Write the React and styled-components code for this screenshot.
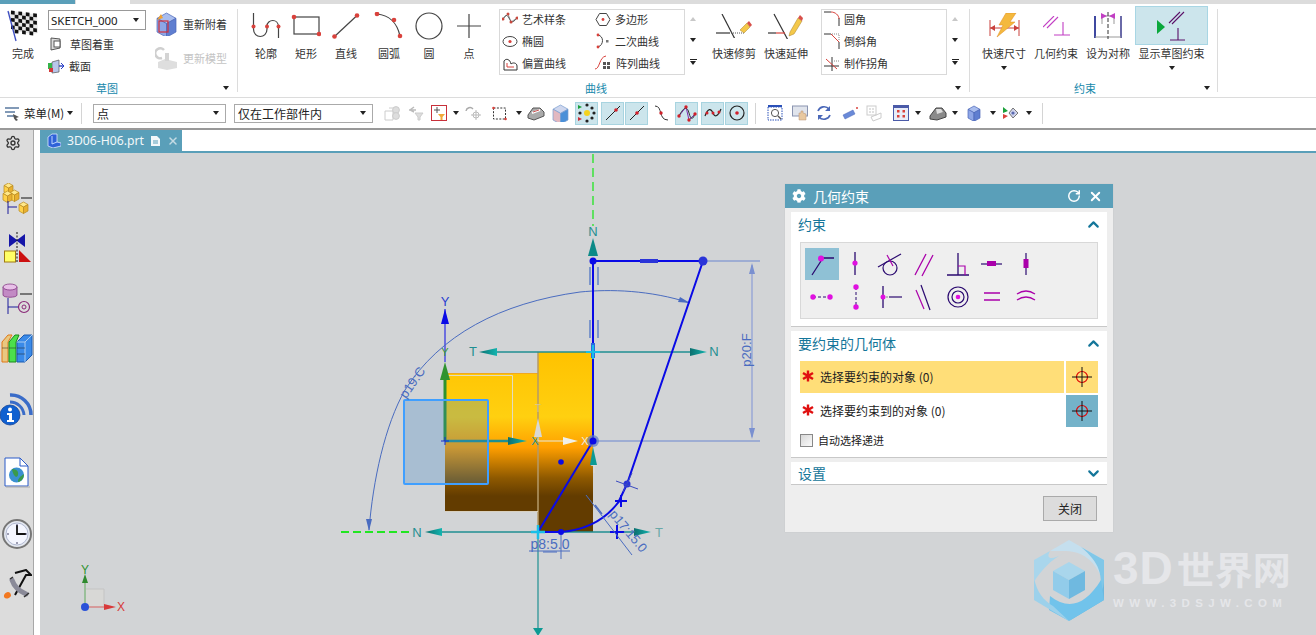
import React from 'react'
import styled, { createGlobalStyle } from 'styled-components'
import { ChevronUp, ChevronDown, RotateCw, X, Settings } from 'lucide-react'
import { FaCog } from 'react-icons/fa'

const CJK = `"Noto Sans CJK SC", "Noto Sans", sans-serif`
const TEAL = '#5a9fb9'

const Global = createGlobalStyle`
  html, body { margin: 0; padding: 0; overflow: hidden; background: #fff; }
  body { font-family: ${CJK}; font-size: 11px; color: #333; }
  svg { display: block; flex: none; }
`

const Page = styled.div`
  width: 1316px;
  height: 635px;
  display: flex;
  flex-direction: column;
  overflow: hidden;
`

const TopStrip = styled.div`
  height: 4px;
  flex: none;
  display: flex;
  background: #dcdcdc;
  &::before { content: ''; width: 75px; background: ${TEAL}; }
  &::after { content: ''; width: 54px; margin-left: 1px; background: #fff; }
`

/* ribbon */
const Ribbon = styled.div`
  height: 93px;
  flex: none;
  display: flex;
  background: #fff;
  border-bottom: 1px solid #dcdcdc;
  box-sizing: content-box;
`
const Group = styled.div`
  width: ${p => p.$w}px;
  display: flex;
  flex-direction: column;
  flex: none;
`
const GroupBody = styled.div`
  height: 74px;
  display: flex;
  padding-left: ${p => p.$pl || 0}px;
`
const GroupFoot = styled.div`
  height: 19px;
  display: flex;
  align-items: center;
  justify-content: space-between;
  padding: 0 ${p => p.$pr}px 0 ${p => p.$pl}px;
  font-size: 11px;
  color: #1688ab;
`
const Divider = styled.div`
  width: 1px;
  flex: none;
  margin: 5px 0;
  background: #dcdcdc;
`
const Caret = styled.span`
  display: block;
  flex: none;
  width: 0;
  height: 0;
  border-left: 3.5px solid transparent;
  border-right: 3.5px solid transparent;
  border-top: 4px solid ${p => p.$c || '#222'};
  transform: ${p => (p.$up ? 'scaleY(-1)' : 'none')};
`
const LargeBtn = styled.div`
  width: ${p => p.$w}px;
  margin-left: ${p => p.$ml || 0}px;
  flex: none;
  display: flex;
  flex-direction: column;
  align-items: center;
  padding-top: 2px;
`
const LargeIcon = styled.div`
  align-self: stretch;
  height: 39px;
  box-sizing: border-box;
  display: flex;
  justify-content: center;
  align-items: center;
  background: ${p => (p.$active ? '#cce5ec' : 'transparent')};
  border: 1px solid ${p => (p.$active ? '#a8d6e4' : 'transparent')};
`
const LargeLabel = styled.div`
  height: 16px;
  line-height: 16px;
  white-space: nowrap;
  color: #333;
`
const CaretRow = styled.div`
  margin-top: 5px;
`
const Column = styled.div`
  width: ${p => p.$w}px;
  margin-left: ${p => p.$ml || 0}px;
  flex: none;
  display: flex;
  flex-direction: column;
`
const SketchSelect = styled.div`
  height: 20px;
  margin-top: 6px;
  box-sizing: border-box;
  border: 1px solid #999;
  display: flex;
  align-items: center;
  justify-content: space-between;
  padding: 0 6px 0 2px;
  font-family: "Noto Sans", sans-serif;
  font-size: 11.5px;
  color: #222;
`
const SmallRow = styled.div`
  height: ${p => p.$h || 22}px;
  margin-top: ${p => p.$mt || 0}px;
  padding-left: ${p => p.$pl || 0}px;
  display: flex;
  align-items: center;
  gap: ${p => p.$gap || 4}px;
  white-space: nowrap;
  color: ${p => (p.$off ? '#c4c4c4' : '#333')};
`
const Gallery = styled.div`
  width: ${p => p.$w}px;
  height: 66px;
  margin: 5px 0 0 ${p => p.$ml || 0}px;
  box-sizing: border-box;
  border: 1px solid #d9d9d9;
  flex: none;
  display: grid;
  grid-template-columns: ${p => p.$cols};
  grid-auto-rows: 18px;
  row-gap: 4px;
  padding: 0 0 0 2px;
`
const GalleryItem = styled.div`
  display: flex;
  align-items: center;
  gap: 4px;
  white-space: nowrap;
`
const GalleryScroll = styled.div`
  width: ${p => p.$w}px;
  flex: none;
  height: 66px;
  margin-top: 5px;
  display: flex;
  flex-direction: column;
  align-items: center;
  justify-content: space-around;
  padding: 0 0 2px;
  box-sizing: border-box;
`
const MoreCaret = styled.span`
  display: flex;
  flex-direction: column;
  gap: 1px;
  &::before { content: ''; width: 7px; height: 1px; background: #222; }
`

/* selection toolbar */
const Toolbar = styled.div`
  height: 32px;
  flex: none;
  box-sizing: border-box;
  background: #fff;
  border-bottom: 2px solid #999;
  display: flex;
  align-items: center;
`
const MenuBtn = styled.div`
  width: 80px;
  padding-left: 4px;
  box-sizing: border-box;
  display: flex;
  align-items: center;
  gap: 3px;
  color: #222;
  font-size: 11.5px;
  white-space: nowrap;
`
const ToolSep = styled.div`
  width: 1px;
  height: 21px;
  flex: none;
  background: #d4d4d4;
  margin-left: ${p => p.$ml}px;
`
const ComboBox = styled.div`
  width: ${p => p.$w}px;
  height: 19px;
  flex: none;
  margin-left: ${p => p.$ml}px;
  box-sizing: border-box;
  border: 1px solid #aaa;
  padding: 0 6px 0 3px;
  display: flex;
  align-items: center;
  justify-content: space-between;
  color: #222;
  font-size: 12px;
`
const Tool = styled.div`
  width: ${p => p.$w}px;
  height: 23px;
  flex: none;
  margin-left: ${p => p.$ml || 0}px;
  box-sizing: border-box;
  display: flex;
  align-items: center;
  justify-content: center;
  background: ${p => (p.$on ? '#cce5ec' : 'transparent')};
  border: 1px solid ${p => (p.$on ? '#a8d4e0' : 'transparent')};
`

/* body */
const Body = styled.div`
  flex: 1;
  min-height: 0;
  display: flex;
`
const Rail = styled.div`
  width: 34px;
  flex: none;
  box-sizing: border-box;
  background: #dcdcdc;
  border-right: 1px solid #a8a8a8;
  display: flex;
  flex-direction: column;
  align-items: center;
`
const RailItem = styled.div`
  margin-top: ${p => p.$mt}px;
  margin-right: ${p => p.$mr || 0}px;
  flex: none;
`
const Gutter = styled.div`
  width: 6px;
  flex: none;
  background: #fff;
`
const Main = styled.div`
  flex: 1;
  min-width: 0;
  display: flex;
  flex-direction: column;
`
const TabBar = styled.div`
  height: 21px;
  flex: none;
  background: #fff;
  display: flex;
  border-bottom: 2px solid ${TEAL};
  box-sizing: content-box;
`
const Tab = styled.div`
  width: 142px;
  box-sizing: border-box;
  background: ${TEAL};
  color: #f2f8fa;
  display: flex;
  align-items: center;
  padding-left: 7px;
  font-family: "Noto Sans", sans-serif;
  font-size: 12.2px;
  gap: 6px;
  white-space: nowrap;
`
const TabClose = styled(X)`
  flex: none;
  color: #c4dbe4;
`
const Canvas = styled.div`
  flex: 1;
  position: relative;
  background: #d2d4d6;
  overflow: hidden;
`
const Drawing = styled.svg`
  position: absolute;
  left: 0;
  top: 0;
`

/* dialog */
const Dialog = styled.div`
  position: absolute;
  left: 745px;
  top: 31px;
  width: 328px;
  height: 348px;
  background: #eee;
  display: flex;
  flex-direction: column;
  box-shadow: 0 0 1px #bbb;
`
const DialogTitle = styled.div`
  height: 24px;
  flex: none;
  background: ${TEAL};
  color: #fff;
  display: flex;
  align-items: center;
  padding: 0 10px 0 7px;
  font-size: 14px;
  gap: 7px;
`
const TitleText = styled.div`
  flex: 1;
`
const Panel = styled.div`
  margin: ${p => p.$mt}px 6px 0;
  background: #fff;
  height: ${p => p.$h}px;
  flex: none;
  border-bottom: 1px solid #c8c8c8;
`
const PanelHead = styled.div`
  height: ${p => p.$h || 26}px;
  box-sizing: border-box;
  display: flex;
  align-items: center;
  justify-content: space-between;
  padding: 0 5px ${p => p.$pb ?? 2}px 7px;
  font-size: 14px;
  color: #14769a;
`
const Palette = styled.div`
  margin: 4px 9px 0;
  height: 77px;
  box-sizing: border-box;
  background: #efefef;
  border: 1px solid #d8d8d8;
  display: grid;
  grid-template-columns: repeat(7, 34px);
  grid-auto-rows: 32px;
  row-gap: 1px;
  padding: 5px 0 0 4px;
`
const PaletteCell = styled.div`
  display: flex;
  align-items: center;
  justify-content: center;
  background: ${p => (p.$on ? '#8fc1d5' : 'transparent')};
`
const PickRow = styled.div`
  display: flex;
  height: 32px;
  margin: ${p => p.$mt}px 9px 0;
  gap: 2px;
`
const PickLabel = styled.div`
  flex: 1;
  display: flex;
  align-items: center;
  gap: 6px;
  padding: 0 0 2px 2px;
  font-size: 12px;
  color: #222;
  background: ${p => (p.$on ? '#ffde78' : 'transparent')};
`
const PickBtn = styled.div`
  width: 32px;
  display: flex;
  align-items: center;
  justify-content: center;
  background: ${p => (p.$on ? '#ffde78' : '#74b2c9')};
`
const CheckRow = styled.div`
  display: flex;
  align-items: center;
  gap: 5px;
  margin: 5px 9px 0;
  font-size: 11px;
  color: #222;
`
const CheckBox = styled.span`
  width: 13px;
  height: 13px;
  box-sizing: border-box;
  border: 1px solid #888;
  background: linear-gradient(135deg, #d8d8d8, #fafafa);
`
const DialogFoot = styled.div`
  flex: 1;
  display: flex;
  justify-content: flex-end;
  align-items: flex-start;
  padding: 11px 16px 0 0;
`
const CloseBtn = styled.div`
  width: 54px;
  height: 25px;
  box-sizing: border-box;
  background: #dcdcdc;
  border: 1px solid #aaa;
  display: flex;
  align-items: center;
  justify-content: center;
  font-size: 12px;
  color: #222;
`

/* watermark */
const Watermark = styled.div`
  position: absolute;
  left: 993px;
  top: 387px;
  display: flex;
  align-items: flex-start;
  gap: 8px;
`
const MarkText = styled.div`
  color: #e5e6e9;
  font-weight: 700;
  padding-top: 5px;
`
const MarkTitle = styled.div`
  display: flex;
  align-items: center;
  height: 46px;
  font-family: "Liberation Sans", ${CJK};
  font-size: 46px;
  line-height: 46px;
  letter-spacing: 1px;
  span { font-family: ${CJK}; font-size: 38px; letter-spacing: 0; margin-left: 3px; }
`
const MarkUrl = styled.div`
  font-family: "Liberation Sans", sans-serif;
  font-size: 11.5px;
  letter-spacing: 5.4px;
  margin-top: 6px;
  white-space: nowrap;
`

/* small drawing helpers */
const RED = '#d9423c'
const INK = '#444'
const Svg = ({ w, h, children }) => (
  <svg width={w} height={h} viewBox={`0 0 ${w} ${h}`} fill="none">{children}</svg>
)
const Dots = ({ pts, r = 2, c = RED }) => pts.map(([x, y], i) => <circle key={i} cx={x} cy={y} r={r} fill={c} />)
const Cube = ({ x, y, s, top = '#a9bdee', left = '#8ea6e6', right = '#5f7ed0', edge = '#4a66b8' }) => {
  const h = s * 0.28
  return (
    <g stroke={edge} strokeWidth=".7">
      <path d={`M${x} ${y + h}L${x + s / 2} ${y}L${x + s} ${y + h}L${x + s / 2} ${y + 2 * h}Z`} fill={top} />
      <path d={`M${x} ${y + h}L${x + s / 2} ${y + 2 * h}V${y + s + h}L${x} ${y + s}Z`} fill={left} />
      <path d={`M${x + s} ${y + h}L${x + s / 2} ${y + 2 * h}V${y + s + h}L${x + s} ${y + s}Z`} fill={right} />
    </g>
  )
}

const FlagIcon = () => {
  const cells = []
  for (let r = 0; r < 6; r++) for (let c = 0; c < 7; c++) {
    if ((r + c) % 2 === 0) cells.push(<rect key={`${r}-${c}`} x={4 + c * 3.7} y={2 + r * 3.7} width="3.7" height="3.7" fill="#111" />)
  }
  return (
    <Svg w={32} h={33}>
      <path d="M2 3C10 0 20 7 30 4L31 24C22 27 13 20 7 24Z" fill="#e8e8e8" />
      <g transform="skewY(7) translate(0,-1)">{cells}</g>
      <path d="M1 2L9 32" stroke="#3a4bc0" strokeWidth="1.3" />
    </Svg>
  )
}
const ReattachIcon = () => (
  <Svg w={24} h={24}>
    <Cube x={2} y={1} s={19} />
    <rect x="4" y="9" width="9" height="11" stroke="#d0303a" strokeWidth="1.2" />
    <path d="M2 8L6 2L8 6Z" fill="#f0a030" />
  </Svg>
)
const UpdateIcon = () => (
  <Svg w={24} h={24}>
    <path d="M3 22V16L10 13L22 16V22L12 24Z" fill="#dedede" />
    <path d="M9 4A5 5 0 1 0 7 12" stroke="#cfcfcf" strokeWidth="2.5" />
    <rect x="10" y="7" width="4" height="8" fill="#d4d4d4" />
  </Svg>
)
const ShadeIcon = () => (
  <Svg w={14} h={14}>
    <path d="M1 1L10 2V11L1 13Z" fill="#ddd" stroke="#555" />
    <rect x="4" y="4" width="6" height="6" fill="#fff" stroke="#555" />
  </Svg>
)
const SectionIcon = () => (
  <Svg w={17} h={15}>
    <path d="M4 3L11 1V13L4 14Z" fill="#b8c6ea" stroke="#555" strokeWidth=".7" />
    <path d="M0 4H4V10H0Z" fill="#36b34a" />
    <path d="M1 9H5V13H1Z" fill="#d23a3a" />
    <path d="M11 7H16" stroke="#2a3fc4" strokeWidth="1.4" />
    <path d="M13 4L16 7L13 10" stroke="#2a3fc4" />
  </Svg>
)
const ProfileIcon = () => (
  <Svg w={32} h={25}>
    <path d="M3.5 0V16C3.5 26 17 26 17 16V13C17 6 28.5 5 28.5 14V25" stroke={INK} strokeWidth="1.2" />
    <Dots pts={[[3.5, 13.5], [17, 13.5], [28.5, 13.5]]} />
  </Svg>
)
const RectIcon = () => (
  <Svg w={30} h={25}>
    <rect x="3" y="4" width="25" height="17" stroke={INK} strokeWidth="1.2" />
    <Dots pts={[[3, 4], [28, 21]]} r={2.3} />
  </Svg>
)
const LineIcon = () => (
  <Svg w={28} h={26}>
    <path d="M2.5 23.5L25 2.5" stroke={INK} strokeWidth="1.2" />
    <Dots pts={[[2.5, 23.5], [25, 2.5]]} r={2.3} />
  </Svg>
)
const ArcIcon = () => (
  <Svg w={30} h={27}>
    <path d="M3 2C14 3 23 10 26 24" stroke={INK} strokeWidth="1.2" />
    <Dots pts={[[3, 2], [20, 8], [26, 24]]} r={2.3} />
  </Svg>
)
const CircleIcon = () => (
  <Svg w={28} h={28}>
    <circle cx="14" cy="14" r="13" stroke={INK} strokeWidth="1.2" />
  </Svg>
)
const PointIcon = () => (
  <Svg w={24} h={24}>
    <path d="M12 0V24M0 12H24" stroke={INK} strokeWidth="1.2" />
  </Svg>
)
const SplineIcon = () => (
  <Svg w={16} h={15}>
    <path d="M1 7L6 2L9 10L15 6" stroke="#999" />
    <path d="M1 7C3 3 5 2 7 6S10 12 15 6" stroke="#555" />
    <Dots pts={[[1, 7], [6, 2], [9, 10], [15, 6]]} r={1.5} c="#c9483e" />
  </Svg>
)
const PolygonIcon = () => (
  <Svg w={16} h={15}>
    <path d="M4.5 1.5H11.5L15 7.5L11.5 13.5H4.5L1 7.5Z" stroke="#444" />
    <Dots pts={[[8, 7.5]]} r={1.4} />
  </Svg>
)
const EllipseIcon = () => (
  <Svg w={16} h={13}>
    <ellipse cx="8" cy="6.5" rx="7" ry="5" stroke="#444" />
    <Dots pts={[[8, 6.5]]} r={1.6} />
  </Svg>
)
const ConicIcon = () => (
  <Svg w={16} h={16}>
    <path d="M3 2C9 3 9 12 3 14" stroke="#444" />
    <Dots pts={[[3, 2], [3, 14]]} r={1.4} />
    <rect x="11" y="7" width="2.5" height="2.5" fill="#777" />
  </Svg>
)
const OffsetIcon = () => (
  <Svg w={16} h={15}>
    <path d="M2 5V14H15V10C15 7 11 6 9 8C8 3 4 2 2 5Z" stroke="#333" />
    <path d="M5 7V11H12" stroke="#d9423c" />
  </Svg>
)
const PatternIcon = () => (
  <Svg w={17} h={16}>
    <path d="M0 14C5 14 4 2 11 1" stroke="#d9423c" />
    <g fill="#555">
      <rect x="8" y="7" width="3" height="3" /><rect x="12" y="7" width="3" height="3" />
      <rect x="8" y="11" width="3" height="3" /><rect x="12" y="11" width="3" height="3" />
    </g>
  </Svg>
)
const Eraser = ({ long }) => (
  <g>
    <path d={long ? 'M22 19L30 5L34 8L26 21L21 23Z' : 'M24 16L31 9L34 13L28 19Z'} fill="#f4c84a" stroke="#a8822a" strokeWidth=".5" />
    <path d={long ? 'M30 5L32 2L35 5L34 8Z' : 'M31 9L33 7L36 11L34 13Z'} fill="#d8504a" />
  </g>
)
const TrimIcon = () => (
  <Svg w={36} h={24}>
    <path d="M6 0L21 29" stroke="#333" strokeWidth="1.2" />
    <path d="M0 19H14" stroke="#333" strokeWidth="1.2" />
    <path d="M15 19H29" stroke="#555" strokeDasharray="1 1" />
    <Eraser />
  </Svg>
)
const ExtendIcon = () => (
  <Svg w={36} h={26}>
    <path d="M6 1L21 29" stroke="#333" strokeWidth="1.2" />
    <path d="M0 20H8" stroke="#333" strokeWidth="1.2" />
    <path d="M8 20H17" stroke="#d9423c" strokeWidth="1.2" />
    <Eraser long />
  </Svg>
)
const FilletIcon = () => (
  <Svg w={16} h={16}>
    <path d="M0 1H7M15 7V15" stroke="#333" />
    <path d="M7 1C11 1 15 4 15 8" stroke="#d9423c" />
  </Svg>
)
const ChamferIcon = () => (
  <Svg w={16} h={16}>
    <path d="M8 1H15V8" stroke="#888" strokeDasharray="1 1" />
    <path d="M0 1H7L15 9V16" stroke="#333" />
    <path d="M7 1L15 9" stroke="#d9423c" />
  </Svg>
)
const CornerIcon = () => (
  <Svg w={16} h={15}>
    <path d="M8 1V15M0 10H15" stroke="#333" />
    <path d="M2 3L13 13" stroke="#d9423c" />
    <path d="M10 5H15" stroke="#888" strokeDasharray="1 1" />
  </Svg>
)
const RapidDimIcon = () => (
  <Svg w={31} h={25}>
    <path d="M1 7V23M30 7V23M1 15H30" stroke="#c9403c" />
    <path d="M1 15L6 12V18ZM30 15L25 12V18Z" fill="#c9403c" />
    <path d="M17 0H27L21 9H26L8 24L14 12H10Z" fill="#f4b93e" stroke="#e08a20" strokeWidth=".5" />
  </Svg>
)
const GeoIcon = () => (
  <Svg w={27} h={20}>
    <path d="M0 11L11 0M4 12L15 1" stroke="#c23fc4" strokeWidth="1.1" />
    <path d="M20 6V19M11 19H27" stroke="#c23fc4" strokeWidth="1.1" />
  </Svg>
)
const SymIcon = () => (
  <Svg w={28} h={27}>
    <path d="M1 4V26" stroke="#3f48a0" strokeWidth="2" />
    <path d="M27 4V26" stroke="#6a6aa8" strokeWidth="2" />
    <path d="M1 25H27" stroke="#999" />
    <path d="M8 4H20M8 4V12M20 4V12" stroke="#999" />
    <path d="M14 0V27" stroke="#333" strokeDasharray="4 2" />
    <path d="M13 4L7 1V7ZM15 4L21 1V7Z" fill="#c23fc4" />
  </Svg>
)
const ShowConIcon = () => (
  <Svg w={31} h={30}>
    <path d="M1 9V23L9 16Z" fill="#0aa83c" />
    <path d="M13 12L24 1M16 13L28 1" stroke="#5a1068" strokeWidth="1.1" />
    <path d="M22 17V29M14 29H29" stroke="#5a1068" strokeWidth="1.1" />
  </Svg>
)

/* toolbar icons */
const MenuIcon = () => (
  <Svg w={17} h={15}>
    <path d="M1 2H15M1 6H11M3 10H11" stroke="#5a7aa0" strokeWidth="1.4" />
    <path d="M9 8L15 11L12 12L14 14L12 15L10 12.5Z" fill="#555" />
  </Svg>
)
const G1 = () => (
  <Svg w={17} h={17}>
    <path d="M1 6H9V15H1ZM5 3H11V8" stroke="#ccc" />
    <circle cx="12" cy="5" r="3.4" fill="#ddd" stroke="#ccc" />
    <circle cx="12" cy="11" r="3.4" fill="#ddd" stroke="#ccc" />
  </Svg>
)
const G2 = () => (
  <Svg w={16} h={16}>
    <path d="M1 5H8M6 2L2 5L6 7" stroke="#bbb" strokeWidth="1.4" />
    <path d="M7 8H15L12 12V15H10V12Z" fill="#ddd" stroke="#ccc" />
  </Svg>
)
const FilterBox = () => (
  <Svg w={16} h={16}>
    <rect x=".5" y=".5" width="15" height="15" stroke="#c8303a" />
    <path d="M3 5H9M6 2V8" stroke="#555" />
    <path d="M7 9H14L11.5 12V15H9.5V12Z" fill="#f2a93a" />
  </Svg>
)
const G3 = () => (
  <Svg w={17} h={15}>
    <path d="M1 5A4 4 0 0 1 8 3" stroke="#aaa" strokeWidth="1.4" />
    <path d="M11 4V14M6 9H16" stroke="#bbb" />
    <circle cx="11" cy="9" r="3" stroke="#bbb" />
  </Svg>
)
const Marquee = () => (
  <Svg w={15} h={15}>
    <rect x="1.5" y="2" width="12" height="11" stroke="#333" strokeDasharray="2 1.4" />
    <Dots pts={[[1.5, 2], [13.5, 13]]} r={1.3} />
  </Svg>
)
const Box3 = () => (
  <Svg w={18} h={15}>
    <path d="M1 9L6 2H13L17 6V10L7 14L1 12Z" fill="#aaa" stroke="#555" />
    <path d="M5 7L13 4" stroke="#fff" strokeWidth="2" />
    <path d="M6 6L12 4" stroke="#c55" />
  </Svg>
)
const BlueBox = () => (
  <Svg w={18} h={18}>
    <Cube x={1} y={1} s={15} top="#cfd7ee" left="#e2b8c0" right="#4a90d8" edge="#7a9ed0" />
  </Svg>
)
const SnapA = () => (
  <Svg w={20} h={20}>
    <circle cx="10" cy="10" r="3" fill="#f4d320" />
    <Dots pts={[[10, 2], [10, 18], [17, 10], [3, 10], [15, 5], [15, 15]]} r={1.6} c="#222" />
    <path d="M1 2L5 4L1 6Z" fill="#1ba03a" />
    <path d="M1 14L5 16L1 18Z" fill="#c9303a" />
  </Svg>
)
const SnapLine = ({ t }) => (
  <Svg w={16} h={16}>
    <path d="M1 15L15 1" stroke="#222" />
    <Dots pts={[[t, 16 - t]]} r={1.8} c="#d0202a" />
  </Svg>
)
const SCurve = () => (
  <Svg w={14} h={16}>
    <path d="M0 1C8 1 3 15 13 15" stroke="#333" />
    <Dots pts={[[6, 8]]} r={1.7} c="#d0202a" />
  </Svg>
)
const SnapPoly = () => (
  <Svg w={20} h={17}>
    <path d="M2 11L9 2L12 15L18 9" stroke="#8030b0" />
    <path d="M2 11C6 3 10 0 12 8S16 14 18 9" stroke="#333" />
    <Dots pts={[[2, 11], [9, 2], [12, 15], [18, 9]]} r={1.7} c="#d0202a" />
  </Svg>
)
const SnapWave = () => (
  <Svg w={18} h={12}>
    <path d="M1 9C4 1 7 1 9 6S14 9 17 2" stroke="#222" strokeWidth="1.2" />
    <Dots pts={[[3, 6], [9, 6], [15, 5]]} r={1.5} c="#d0202a" />
  </Svg>
)
const SnapCircle = () => (
  <Svg w={16} h={16}>
    <circle cx="8" cy="8" r="7" stroke="#222" strokeWidth="1.2" />
    <Dots pts={[[8, 8]]} r={1.8} c="#d0202a" />
  </Svg>
)
const ViewFit = () => (
  <Svg w={16} h={16}>
    <path d="M1 1H15" stroke="#2a50b8" strokeWidth="2" />
    <rect x="1" y="2" width="14" height="13" stroke="#2a50b8" strokeDasharray="1.5 1" />
    <circle cx="8" cy="8" r="3.6" stroke="#555" />
    <path d="M11 11L14 14" stroke="#555" strokeWidth="1.4" />
  </Svg>
)
const ViewPan = () => (
  <Svg w={16} h={16}>
    <rect x=".5" y="1" width="15" height="10" fill="#e0e4ec" stroke="#8a94b0" />
    <path d="M7 15V8L9 8V6H11V8L14 9V15Z" fill="#e8c8a0" stroke="#b89070" strokeWidth=".5" />
  </Svg>
)
const ViewRot = () => (
  <Svg w={16} h={16}>
    <path d="M2 6A6.5 6.5 0 0 1 13 4M14 10A6.5 6.5 0 0 1 3 12" stroke="#4a68b8" strokeWidth="1.7" />
    <path d="M14 1V6H9ZM2 15V10H7Z" fill="#4a68b8" />
  </Svg>
)
const Wand = () => (
  <Svg w={16} h={14}>
    <path d="M1 9L11 4L13 8L3 13Z" fill="#6a8ad8" stroke="#4a66b8" strokeWidth=".5" />
    <Dots pts={[[15, 2]]} r={1} />
  </Svg>
)
const LayoutIcon = () => (
  <Svg w={16} h={17}>
    <rect x="1" y="1" width="9" height="9" stroke="#ccc" />
    <path d="M5 12L15 8V13L7 16Z" stroke="#ccc" />
    <Dots pts={[[4, 4], [7, 4], [4, 7], [7, 7]]} r={.7} c="#aaa" />
  </Svg>
)
const FourView = () => (
  <Svg w={16} h={16}>
    <rect x=".5" y=".5" width="15" height="15" fill="#e8ecf8" stroke="#4a5aa8" />
    <path d="M.5 2H15.5" stroke="#4a5aa8" strokeWidth="2" />
    <g fill="#d9423c"><rect x="4" y="5" width="2.5" height="2.5" /><rect x="9.5" y="5" width="2.5" height="2.5" /><rect x="4" y="10" width="2.5" height="2.5" /><rect x="9.5" y="10" width="2.5" height="2.5" /></g>
  </Svg>
)
const Shaded = () => (
  <Svg w={18} h={15}>
    <path d="M1 10L7 2H13L17 7V11L8 14L1 13Z" fill="#8a8a8a" stroke="#444" />
    <path d="M7 3H12L14 6L8 8Z" fill="#ddd" />
  </Svg>
)
const SmallBlue = () => (
  <Svg w={16} h={16}>
    <Cube x={1} y={1} s={12} />
  </Svg>
)
const ShowHide = () => (
  <Svg w={16} h={14}>
    <path d="M1 1L6 5L1 7Z" fill="#1ba03a" />
    <path d="M1 8L6 10L1 13Z" fill="#d9423c" />
    <path d="M7 7L11 2L16 7L11 12Z" fill="#d0d4ec" stroke="#777" />
    <circle cx="11" cy="7" r="1.6" fill="#5a6ab0" />
  </Svg>
)

/* constraint palette */
const P = '#aa00aa'
const N = '#2b0a70'
const M = '#e010e0'
const Con = ({ children }) => <Svg w={30} h={30}>{children}</Svg>
const constraintIcons = [
  <Con><path d="M5 26L14 12M15 9H27" stroke={N} strokeWidth="1.3" /><circle cx="14" cy="9.5" r="3" fill={M} /></Con>,
  <Con><path d="M14 3V26" stroke={N} strokeWidth="1.3" /><circle cx="14" cy="14" r="2.6" fill={M} /></Con>,
  <Con><circle cx="15" cy="19" r="7" stroke={N} strokeWidth="1.2" /><path d="M3 18L26 5" stroke={N} strokeWidth="1.2" /><path d="M12 6L18 17" stroke={P} strokeWidth="1.2" /></Con>,
  <Con><path d="M6 26L17 5M13 27L24 6" stroke={P} strokeWidth="1.3" /></Con>,
  <Con><path d="M15 4V26M4 26H26" stroke={N} strokeWidth="1.3" /><path d="M15 17H22V26" stroke={P} strokeWidth="1.2" /></Con>,
  <Con><path d="M4 15H25" stroke={N} strokeWidth="1.2" /><rect x="10" y="12" width="9" height="5" fill={P} /></Con>,
  <Con><path d="M15 4V26" stroke={N} strokeWidth="1.2" /><rect x="12.5" y="10" width="5" height="9" fill={P} /></Con>,
  <Con><path d="M6 15H23" stroke={N} strokeDasharray="3 2" /><circle cx="6" cy="15" r="2.7" fill={M} /><circle cx="23" cy="15" r="2.7" fill={M} /></Con>,
  <Con><path d="M15 5V26" stroke={N} strokeDasharray="3 2" /><circle cx="15" cy="5" r="2.7" fill={M} /><circle cx="15" cy="25" r="2.7" fill={M} /></Con>,
  <Con><path d="M8 4V26" stroke={N} strokeWidth="1.3" /><path d="M8 15H14" stroke="#888" strokeDasharray="2 1" /><path d="M14 15H27" stroke={N} strokeWidth="1.2" /><circle cx="8" cy="15" r="2.5" fill={M} /></Con>,
  <Con><path d="M7 8L15 27" stroke={P} strokeWidth="1.2" /><path d="M12 3L21 28" stroke={N} strokeWidth="1.2" /></Con>,
  <Con><circle cx="15" cy="15" r="10" stroke={N} strokeWidth="1.2" /><circle cx="15" cy="15" r="6" stroke={N} strokeWidth="1.2" /><circle cx="15" cy="15" r="2.3" fill={M} /></Con>,
  <Con><path d="M7 11H23M7 18H23" stroke={P} strokeWidth="1.3" /></Con>,
  <Con><path d="M6 12C12 8 18 8 24 12M6 18C12 14 18 14 24 18" stroke={P} strokeWidth="1.3" /></Con>,
]
const Target = () => (
  <Svg w={20} h={20}>
    <circle cx="10" cy="10" r="5.5" stroke="#e00000" strokeWidth="1.2" />
    <path d="M10 0V20M0 10H20" stroke="#111" />
  </Svg>
)
const Star = () => (
  <Svg w={12} h={12}>
    <path d="M6 .5V11.5M1 3L11 9M11 3L1 9" stroke="#e01010" strokeWidth="2.4" />
  </Svg>
)
const PartIcon = () => (
  <Svg w={14} h={15}>
    <path d="M5 1H10V9L14 10V13L6 15L1 13V4Z" fill="#2f62d8" stroke="#dce8ff" strokeWidth=".8" />
    <path d="M5 3V11L10 9" stroke="#bcd4ff" />
  </Svg>
)
const TabDoc = () => (
  <Svg w={11} h={12}>
    <path d="M1 1H7L10 4V11H1Z" fill="#f4f8fa" />
    <path d="M3 6H8M3 8H8" stroke={TEAL} />
  </Svg>
)

/* rail icons */
const Tiny = ({ x, y, s }) => <Cube x={x} y={y} s={s} top="#ffe88a" left="#ffd24a" right="#e8b030" edge="#b88a20" />
const AssemblyIcon = () => (
  <Svg w={30} h={32}>
    <Tiny x={2} y={0} s={9} /><Tiny x={8} y={7} s={9} /><Tiny x={1} y={8} s={9} />
    <path d="M6 18V31M6 24H15" stroke="#1a1a9a" />
    <path d="M19 15H30" stroke="#111" />
    <Tiny x={17} y={19} s={9} />
  </Svg>
)
const ConstraintNavIcon = () => (
  <Svg w={30} h={31}>
    <path d="M7 2L15 8L23 2V15L15 9L7 15Z" fill="#1616a8" />
    <rect x="2.5" y="19" width="11" height="11" fill="#ffff66" stroke="#a07a10" />
    <path d="M17 18L29 30H17Z" fill="#cc1010" />
    <path d="M15 0V31" stroke="#111" strokeDasharray="2 1.5" />
  </Svg>
)
const CylinderTreeIcon = () => (
  <Svg w={30} h={31}>
    <path d="M1 4V12C1 15 15 15 15 12V4Z" fill="#c28ac4" stroke="#7a2a7a" strokeWidth=".7" />
    <ellipse cx="8" cy="4" rx="7" ry="3" fill="#e8c0e8" stroke="#7a2a7a" strokeWidth=".7" />
    <path d="M18 11H30" stroke="#111" />
    <path d="M6 15V31M6 24H16" stroke="#1a1a9a" />
    <circle cx="22" cy="24" r="5.5" stroke="#8a2a78" strokeWidth="1.2" />
    <circle cx="22" cy="24" r="2" stroke="#8a2a78" />
  </Svg>
)
const BooksIcon = () => (
  <Svg w={32} h={29}>
    <path d="M1 8L7 1H11L7 8V28H1Z" fill="#e8c880" stroke="#e07818" />
    <path d="M8 8L14 1H18L15 8V28H8Z" fill="#4ce04c" stroke="#1a8a1a" />
    <path d="M16 8L23 1H31V21L24 28H16Z" fill="#3a8ae8" stroke="#1a5ab0" />
    <path d="M16 8H24L31 1M24 8V28" stroke="#aaccf0" />
    <path d="M1 14H7M8 14H15M16 14H24M16 20H24" stroke="#222" strokeWidth=".5" />
  </Svg>
)
const InfoIcon = () => (
  <Svg w={33} h={33}>
    <path d="M10 2A20 20 0 0 1 31 22" stroke="#3a6cc8" strokeWidth="3.5" />
    <path d="M10 9A14 14 0 0 1 24 22" stroke="#3a6cc8" strokeWidth="3" />
    <circle cx="10" cy="22" r="10" fill="#1060d0" stroke="#0a3a90" strokeWidth=".7" />
    <circle cx="10" cy="16.5" r="2" fill="#fff" />
    <path d="M7 20H12V27H14V29H7V27H9V22H7Z" fill="#fff" />
  </Svg>
)
const DocIcon = () => (
  <Svg w={26} h={31}>
    <path d="M1 1H16L24 9V29H1Z" fill="#fff" stroke="#2a5ac8" />
    <path d="M16 1V9H24" stroke="#2a5ac8" />
    <path d="M2 30H26" stroke="#aaa" />
    <circle cx="12.5" cy="18" r="7.5" fill="#3a90d0" />
    <path d="M8 12C12 12 15 14 14 18S9 19 8 12ZM14 23C16 19 19 18 20 17C20 21 18 24 14 25Z" fill="#3a9a4a" />
  </Svg>
)
const ClockIcon = () => (
  <Svg w={30} h={30}>
    <circle cx="15" cy="15" r="14" fill="#e4e8f0" stroke="#777" strokeWidth="2" />
    <circle cx="15" cy="15" r="11" fill="#f4f6ff" stroke="#b0b8d0" />
    <path d="M15 6V15H24" stroke="#111" strokeWidth="1.8" />
    <path d="M15 5V7M15 23V25M5 15H7M23 15H25" stroke="#446" />
  </Svg>
)
const ToolsIcon = () => (
  <Svg w={30} h={32}>
    <path d="M13 4L24 1L29 6L24 6L13 26" stroke="#111" strokeWidth="2" />
    <path d="M10 11C12 17 17 22 24 25" stroke="#8a8a98" strokeWidth="5" strokeLinecap="round" />
    <path d="M8 10L11 8M22 28L27 24" stroke="#333" strokeWidth="1.5" />
    <path d="M2 26C5 21 9 23 9 27C6 31 1 30 2 26Z" fill="#f27820" />
  </Svg>
)

/* watermark logo */
const MarkLogo = () => (
  <Svg w={72} h={82}>
    <path d="M36 0L71 20L68 36C58 16 46 10 26 11L17 11Z" fill="#c5dfee" />
    <path d="M48 7L71 20V60L65 58C72 36 66 22 48 7Z" fill="#80c7e8" />
    <path d="M71 38V60L36 81L60 60C70 53 71 46 71 38Z" fill="#6cb8de" />
    <path d="M17 56C35 70 52 66 68 40L71 60L36 81L16 70Z" fill="#71c3eb" />
    <path d="M1 38C4 52 10 60 20 66L36 81L1 60Z" fill="#9cd1eb" />
    <path d="M1 20L17 11C12 20 20 20 31 13C18 20 8 30 1 42Z" fill="#a9d6ec" />
    <path d="M36 18L55 29V52L36 63L17 52V29Z" fill="#d2d4d6" />
    <path d="M36 22L52 31L36 40L20 31Z" fill="#a9d6ec" />
    <path d="M20 31L36 40V59L20 50Z" fill="#92ccea" />
    <path d="M52 31L36 40V59L52 50Z" fill="#6fb9e0" />
  </Svg>
)

/* the sketch, in page coordinates so the geometry reads straight off the canvas */
const B = '#0a0ae6'
const AXIS = '#1f8f92'
const DIM = '#4a6cc0'
const Label = ({ x, y, c = AXIS, size = 13, children, rot }) => (
  <text x={x} y={y} fill={c} fontSize={size} fontFamily='"Liberation Sans", sans-serif' textAnchor="middle"
    transform={rot ? `rotate(${rot} ${x} ${y})` : undefined}>{children}</text>
)
const Plus = ({ x, y, s, c, w = 2 }) => <path d={`M${x - s} ${y}H${x + s}M${x} ${y - s}V${y + s}`} stroke={c} strokeWidth={w} />

const Sketch = () => (
  <Drawing width="1276" height="482" viewBox="40 153 1276 482" fill="none">
    <defs>
      <linearGradient id="metal" gradientUnits="userSpaceOnUse" x1="0" y1="352" x2="0" y2="532">
        <stop offset="0" stopColor="#ffc200" />
        <stop offset=".36" stopColor="#ffd010" />
        <stop offset=".53" stopColor="#ff9f00" />
        <stop offset=".7" stopColor="#8e5900" />
        <stop offset=".8" stopColor="#633c00" />
        <stop offset="1" stopColor="#633c00" />
      </linearGradient>
      <linearGradient id="axisHead" x1="0" y1="0" x2="1" y2="0">
        <stop offset="0" stopColor="#0c6f6f" />
        <stop offset="1" stopColor="#12b5b0" />
      </linearGradient>
    </defs>

    <path d="M445 373H538V511H445Z" fill="url(#metal)" />
    <path d="M538 352H593V532H538Z" fill="url(#metal)" />
    <path d="M445 373.5H538" stroke="#f0a820" />
    <path d="M538 352V532" stroke="#b49a68" strokeWidth="1.5" />
    <path d="M448 375.5H512.5V438" stroke="#e2dcc0" />
    <path d="M445 511.5H538" stroke="#d8d0c0" />

    <path d="M593 154V226" stroke="#22e622" strokeWidth="1.3" strokeDasharray="9 5" />
    <path d="M341 532H412" stroke="#22e622" strokeWidth="2" strokeDasharray="8 4" />

    <path d="M445 309V362" stroke={B} />
    <path d="M445 309L449 324H441Z" fill={B} />
    <Label x={445} y={306} c="#2a3fd0">Y</Label>
    <Label x={445} y={356} c="#3a9a3a" size={11}>Y</Label>
    <path d="M445 375V441" stroke="#2f932f" strokeWidth="3" />
    <path d="M445 362L450 380H440Z" fill="#2f932f" />

    <path d="M497 352H690" stroke={AXIS} strokeWidth="1.5" />
    <path d="M479 352L497 348V356Z" fill="url(#axisHead)" />
    <path d="M707 352L690 348V356Z" fill="url(#axisHead)" />
    <Label x={473} y={356}>T</Label>
    <Label x={714} y={356}>N</Label>
    <path d="M593 238L598 256H588Z" fill="#0c8a88" />
    <Label x={593} y={236}>N</Label>

    <path d="M445 441H510" stroke={AXIS} strokeWidth="2.5" />
    <path d="M527 441L508 437V445Z" fill="url(#axisHead)" />
    <Label x={535} y={445} size={11}>X</Label>
    <path d="M538 441H566" stroke="#e8e8e0" />
    <path d="M578 441L563 437V445Z" fill="#f0f0ea" />
    <Label x={585} y={445} c="#e8e8e0" size={11}>X</Label>
    <path d="M538 441V430" stroke="#ddd" />
    <path d="M538 418L542 437H534Z" fill="#d8d8d4" />
    <Label x={538} y={412} c="#d8c890" size={10}>T</Label>
    <path d="M593 447L597 465H590Z" fill="#0c9a94" />
    <Label x={594} y={473} c="#ddd" size={10}>T</Label>

    <path d="M442 532H634" stroke={AXIS} strokeWidth="1.5" />
    <path d="M425 532L442 528V536Z" fill="url(#axisHead)" />
    <path d="M651 532L634 528V536Z" fill="url(#axisHead)" />
    <Label x={417} y={537}>N</Label>
    <Label x={659} y={537} c="#6aa8a8">T</Label>
    <path d="M538 532V630" stroke={AXIS} strokeWidth="1.2" />
    <path d="M538 636L533 628H543Z" fill="#0c9a94" />

    <rect x="404" y="400" width="84" height="84" rx="1" fill="rgb(55,133,200)" fillOpacity=".27" stroke="#3f9fff" strokeWidth="2" />
    <Plus x={445} y={441} s={4} c="#1a2ad0" w={1} />

    <path d="M706 261H760M596 441H760" stroke="#6a86d0" />
    <path d="M752 265V437" stroke="#9aa9d6" strokeWidth="1.5" />
    <path d="M752 263L755 274H749ZM752 439L755 428H749Z" fill="#7a90d0" />
    <Label x={751} y={350} c={DIM} size={13} rot={-90}>p20:F</Label>

    <path d="M690 303C650 290 610 289 580 292C500 303 440 335 405 390C385 425 373 480 369 530" stroke={DIM} />
    <path d="M690 303L678 302L680 297ZM369 531L366 519L372 519Z" fill={DIM} />
    <Label x={416} y={385} c={DIM} size={13} rot={-55}>p19:C</Label>

    <path d="M590 267V285M598 267V285M590 320V338M598 320V338" stroke="#4f76c4" strokeWidth="1.3" />
    <path d="M593 261H703M593 261V441" stroke={B} strokeWidth="2" />
    <path d="M640 261H658" stroke="#2a34d8" strokeWidth="4" />
    <path d="M703 261L627 484L618 503" stroke={B} strokeWidth="2" />
    <path d="M593 441L538 532" stroke={B} strokeWidth="2" />
    <path d="M538 532H561C585 530 606 520 620 500" stroke={B} strokeWidth="2" />
    <path d="M593 343V358" stroke="#2a6ae0" strokeWidth="4" />
    <Plus x={593} y={352} s={7} c="#18bfe8" w={2} />
    <Plus x={538} y={532} s={7} c="#18bfe8" w={2.5} />

    <circle cx="593" cy="261" r="3.5" fill={B} />
    <circle cx="703" cy="261" r="4.5" fill="#2a34d8" />
    <circle cx="593" cy="441" r="6" fill="#5a78c8" fillOpacity=".7" />
    <circle cx="593" cy="441" r="3.5" fill={B} />
    <circle cx="561" cy="462" r="2.8" fill={B} />
    <circle cx="561" cy="532" r="3" fill={B} />
    <circle cx="627" cy="484" r="3.5" fill="#2a34d8" />
    <path d="M616 481L638 489M632 473L623 492" stroke="#3a4ac0" />
    <Plus x={621} y={501} s={6} c={B} w={2} />
    <Plus x={617} y={532} s={7} c={B} w={2} />

    <path d="M586 495L632 555" stroke={DIM} />
    <path d="M595 505L602 514" stroke={DIM} strokeWidth="1.5" />
    <Label x={625} y={534} c={DIM} size={13} rot={50}>p17:15.0</Label>
    <Label x={550} y={549} c={DIM} size={14}>p8:5.0</Label>
    <path d="M529 551H570M561 535V559M543 552H557" stroke={DIM} />

    <path d="M85 589H104V607H85Z" fill="#d8d8d6" stroke="#c4c4c4" />
    <path d="M85 607V580" stroke="#9ac09a" strokeWidth="2" />
    <path d="M85 574L88 583H82Z" fill="#2f8a2f" />
    <Label x={85} y={574} c="#2f932f" size={12}>Y</Label>
    <path d="M85 607H110" stroke="#d88a88" strokeWidth="1.5" />
    <path d="M116 607L104 604V610Z" fill="#d83a3a" />
    <Label x={121} y={611} c="#d83a3a" size={12}>X</Label>
    <circle cx="85" cy="607" r="4" fill="#2a52d8" />
  </Drawing>
)

const shapeButtons = [
  ['轮廓', 40, <ProfileIcon />], ['矩形', 40, <RectIcon />], ['直线', 40, <LineIcon />],
  ['圆弧', 46, <ArcIcon />], ['圆', 34, <CircleIcon />], ['点', 46, <PointIcon />],
]
const curveItems = [
  ['艺术样条', <SplineIcon />], ['多边形', <PolygonIcon />],
  ['椭圆', <EllipseIcon />], ['二次曲线', <ConicIcon />],
  ['偏置曲线', <OffsetIcon />], ['阵列曲线', <PatternIcon />],
]
const cornerItems = [['圆角', <FilletIcon />], ['倒斜角', <ChamferIcon />], ['制作拐角', <CornerIcon />]]

const tools = [
  { w: 24, ml: 7, icon: <G1 /> }, { w: 24, icon: <G2 /> }, { w: 22, icon: <FilterBox /> }, { w: 12, caret: 1 },
  { w: 22, icon: <G3 /> }, { w: 28, ml: 1, icon: <Marquee /> }, { w: 11, caret: 1 }, { w: 24, icon: <Box3 /> },
  { w: 22, ml: 2, icon: <BlueBox /> }, { w: 23, ml: 3, on: 1, icon: <SnapA /> }, { w: 23, ml: 3, on: 1, icon: <SnapLine t={11} /> },
  { w: 23, ml: 1, on: 1, icon: <SnapLine t={8} /> }, { w: 13, ml: 7, icon: <SCurve /> }, { w: 23, ml: 7, on: 1, icon: <SnapPoly /> },
  { w: 23, ml: 3, on: 1, icon: <SnapWave /> }, { w: 23, ml: 1, on: 1, icon: <SnapCircle /> }, { sep: 7 },
  { w: 16, ml: 11, icon: <ViewFit /> }, { w: 16, ml: 9, icon: <ViewPan /> }, { w: 16, ml: 8, icon: <ViewRot /> },
  { w: 16, ml: 10, icon: <Wand /> }, { w: 16, ml: 8, icon: <LayoutIcon /> }, { w: 18, ml: 10, icon: <FourView /> }, { w: 12, ml: 2, caret: 1 },
  { w: 18, ml: 5, icon: <Shaded /> }, { w: 12, ml: 2, caret: 1 }, { w: 16, ml: 6, icon: <SmallBlue /> }, { w: 12, ml: 4, caret: 1 },
  { w: 16, ml: 3, icon: <ShowHide /> }, { w: 12, ml: 5, caret: 1 }, { sep: 7 },
]

const railIcons = [
  [32, <AssemblyIcon />], [17, <ConstraintNavIcon />], [20, <CylinderTreeIcon />], [20, <BooksIcon />],
  [30, <InfoIcon />], [31, <DocIcon />], [31, <ClockIcon />], [20, <ToolsIcon />],
]

export default function App() {
  return (
    <Page>
      <Global />
      <TopStrip />
      <Ribbon>
        <Group $w={237}>
          <GroupBody>
            <LargeBtn $w={46}>
              <LargeIcon><FlagIcon /></LargeIcon>
              <LargeLabel>完成</LargeLabel>
            </LargeBtn>
            <Column $w={98} $ml={2}>
              <SketchSelect>SKETCH_000<Caret /></SketchSelect>
              <SmallRow $mt={3} $pl={2} $gap={6}><ShadeIcon />草图着重</SmallRow>
              <SmallRow $gap={4}><SectionIcon />截面</SmallRow>
            </Column>
            <Column $w={80} $ml={9}>
              <SmallRow $h={24} $mt={8}><ReattachIcon />重新附着</SmallRow>
              <SmallRow $h={24} $mt={10} $off><UpdateIcon />更新模型</SmallRow>
            </Column>
          </GroupBody>
          <GroupFoot $pl={96} $pr={8}>草图<Caret /></GroupFoot>
        </Group>
        <Divider />
        <Group $w={731}>
          <GroupBody $pl={8}>
            {shapeButtons.map(([label, w, icon]) => (
              <LargeBtn key={label} $w={w}>
                <LargeIcon>{icon}</LargeIcon>
                <LargeLabel>{label}</LargeLabel>
              </LargeBtn>
            ))}
            <Gallery $w={186} $ml={7} $cols="93px 91px">
              {curveItems.map(([label, icon]) => <GalleryItem key={label}>{icon}{label}</GalleryItem>)}
            </Gallery>
            <GalleryScroll $w={16}>
              <Caret $c="#c8c8c8" $up />
              <Caret />
              <MoreCaret><Caret /></MoreCaret>
            </GalleryScroll>
            <LargeBtn $w={52} $ml={7}>
              <LargeIcon><TrimIcon /></LargeIcon>
              <LargeLabel>快速修剪</LargeLabel>
            </LargeBtn>
            <LargeBtn $w={52}>
              <LargeIcon><ExtendIcon /></LargeIcon>
              <LargeLabel>快速延伸</LargeLabel>
            </LargeBtn>
            <Gallery $w={126} $ml={9} $cols="120px">
              {cornerItems.map(([label, icon]) => <GalleryItem key={label}>{icon}{label}</GalleryItem>)}
            </Gallery>
            <GalleryScroll $w={16}>
              <Caret $c="#c8c8c8" $up />
              <Caret />
              <MoreCaret><Caret /></MoreCaret>
            </GalleryScroll>
          </GroupBody>
          <GroupFoot $pl={347} $pr={8}>曲线<Caret /></GroupFoot>
        </Group>
        <Divider />
        <Group $w={247}>
          <GroupBody $pl={8}>
            <LargeBtn $w={52}>
              <LargeIcon><RapidDimIcon /></LargeIcon>
              <LargeLabel>快速尺寸</LargeLabel>
              <CaretRow><Caret /></CaretRow>
            </LargeBtn>
            <LargeBtn $w={52}>
              <LargeIcon><GeoIcon /></LargeIcon>
              <LargeLabel>几何约束</LargeLabel>
            </LargeBtn>
            <LargeBtn $w={52}>
              <LargeIcon><SymIcon /></LargeIcon>
              <LargeLabel>设为对称</LargeLabel>
            </LargeBtn>
            <LargeBtn $w={73} $ml={1}>
              <LargeIcon $active><ShowConIcon /></LargeIcon>
              <LargeLabel>显示草图约束</LargeLabel>
              <CaretRow><Caret /></CaretRow>
            </LargeBtn>
          </GroupBody>
          <GroupFoot $pl={104} $pr={7}>约束<Caret /></GroupFoot>
        </Group>
        <Divider />
      </Ribbon>

      <Toolbar>
        <MenuBtn><MenuIcon />菜单(M)<Caret /></MenuBtn>
        <ToolSep $ml={1} />
        <ComboBox $w={133} $ml={11}>点<Caret /></ComboBox>
        <ComboBox $w={139} $ml={8}>仅在工作部件内<Caret /></ComboBox>
        {tools.map((t, i) => {
          if (t.sep) return <ToolSep key={i} $ml={t.sep} />
          return (
            <Tool key={i} $w={t.w} $ml={t.ml} $on={t.on}>
              {t.caret ? <Caret /> : t.icon}
            </Tool>
          )
        })}
      </Toolbar>

      <Body>
        <Rail>
          <RailItem $mt={5} $mr={7}><Settings size={16} color="#333" /></RailItem>
          {railIcons.map(([mt, icon], i) => <RailItem key={i} $mt={mt}>{icon}</RailItem>)}
        </Rail>
        <Gutter />
        <Main>
          <TabBar>
            <Tab>
              <PartIcon />3D06-H06.prt
              <TabDoc />
              <TabClose size={12} strokeWidth={3} />
            </Tab>
          </TabBar>
          <Canvas>
            <Sketch />
            <Dialog>
              <DialogTitle>
                <FaCog size={14} />
                <TitleText>几何约束</TitleText>
                <RotateCw size={14} strokeWidth={2.5} />
                <X size={15} strokeWidth={3} />
              </DialogTitle>
              <Panel $mt={4} $h={114}>
                <PanelHead>约束<ChevronUp size={17} strokeWidth={3} /></PanelHead>
                <Palette>
                  {constraintIcons.map((icon, i) => <PaletteCell key={i} $on={i === 0}>{icon}</PaletteCell>)}
                </Palette>
              </Panel>
              <Panel $mt={4} $h={126}>
                <PanelHead>要约束的几何体<ChevronUp size={17} strokeWidth={3} /></PanelHead>
                <PickRow $mt={4}>
                  <PickLabel $on><Star />选择要约束的对象 (0)</PickLabel>
                  <PickBtn $on><Target /></PickBtn>
                </PickRow>
                <PickRow $mt={2}>
                  <PickLabel><Star />选择要约束到的对象 (0)</PickLabel>
                  <PickBtn><Target /></PickBtn>
                </PickRow>
                <CheckRow><CheckBox />自动选择递进</CheckRow>
              </Panel>
              <Panel $mt={4} $h={22}>
                <PanelHead $h={22} $pb={0}>设置<ChevronDown size={17} strokeWidth={3} /></PanelHead>
              </Panel>
              <DialogFoot><CloseBtn>关闭</CloseBtn></DialogFoot>
            </Dialog>
            <Watermark>
              <MarkLogo />
              <MarkText>
                <MarkTitle>3D<span>世界网</span></MarkTitle>
                <MarkUrl>WWW.3DSJW.COM</MarkUrl>
              </MarkText>
            </Watermark>
          </Canvas>
        </Main>
      </Body>
    </Page>
  )
}
